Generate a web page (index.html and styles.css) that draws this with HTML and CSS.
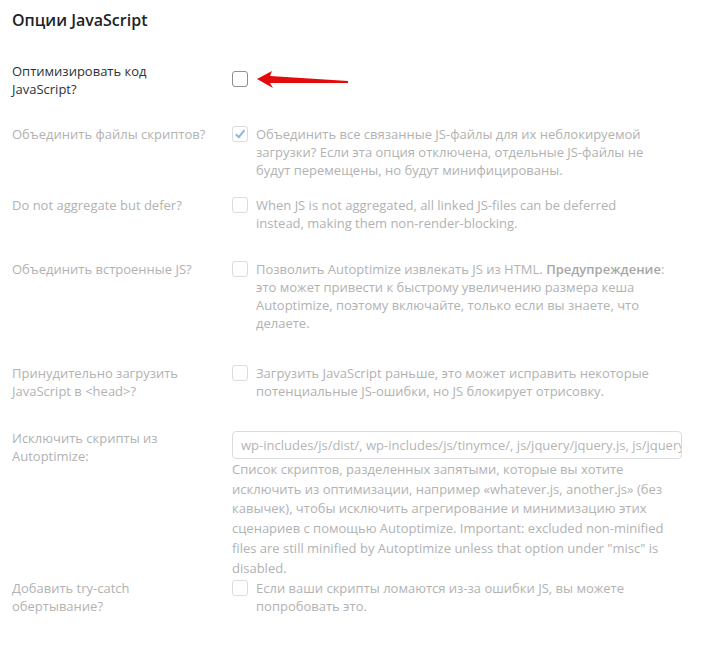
FILE: index.html
```html
<!DOCTYPE html>
<html lang="ru">
<head>
<meta charset="utf-8">
<title>Опции JavaScript</title>
<link rel="stylesheet" href="styles.css">
</head>
<body>
<div class="page">
  <h2 class="title">Опции JavaScript</h2>

  <div class="row r1">
    <div class="label active">Оптимизировать код JavaScript?</div>
    <div class="field">
      <div class="opt">
        <span class="cb active-cb"></span>
      </div>
      <svg class="arrow" width="100" height="24" viewBox="0 0 100 24" aria-hidden="true">
        <polygon points="1,9 16,1 14,6 92,11 92,13 14,13 17,18" fill="#e30b0b"/>
      </svg>
    </div>
  </div>

  <div class="row r2 disabled">
    <div class="label">Объединить файлы скриптов?</div>
    <div class="field">
      <div class="opt">
        <span class="cb checked">
          <svg width="12" height="12" viewBox="0 0 12 12"><path d="M1.8 6.2 L4.8 9.2 L10.4 2.2" fill="none" stroke="#8fb8da" stroke-width="2"/></svg>
        </span>
        <p class="desc">Объединить все связанные JS-файлы для их неблокируемой загрузки? Если эта опция отключена, отдельные JS-файлы не будут перемещены, но будут минифицированы.</p>
      </div>
    </div>
  </div>

  <div class="row r3 disabled">
    <div class="label">Do not aggregate but defer?</div>
    <div class="field">
      <div class="opt">
        <span class="cb"></span>
        <p class="desc">When JS is not aggregated, all linked JS-files can be deferred instead, making them non-render-blocking.</p>
      </div>
    </div>
  </div>

  <div class="row r4 disabled">
    <div class="label">Объединить встроенные JS?</div>
    <div class="field">
      <div class="opt">
        <span class="cb"></span>
        <p class="desc">Позволить Autoptimize извлекать JS из HTML. <strong>Предупреждение</strong>: это может привести к быстрому увеличению размера кеша Autoptimize, поэтому включайте, только если вы знаете, что делаете.</p>
      </div>
    </div>
  </div>

  <div class="row r5 disabled">
    <div class="label">Принудительно загрузить JavaScript в &lt;head&gt;?</div>
    <div class="field">
      <div class="opt">
        <span class="cb"></span>
        <p class="desc">Загрузить JavaScript раньше, это может исправить некоторые потенциальные JS-ошибки, но JS блокирует отрисовку.</p>
      </div>
    </div>
  </div>

  <div class="row r6 disabled">
    <div class="label">Исключить скрипты из Autoptimize:</div>
    <div class="field">
      <div class="input">wp-includes/js/dist/, wp-includes/js/tinymce/, js/jquery/jquery.js, js/jquery/jquery.min.js</div>
      <p class="desc wide">Список скриптов, разделенных запятыми, которые вы хотите исключить из оптимизации, например «whatever.js, another.js» (без кавычек), чтобы исключить агрегирование и минимизацию этих сценариев с помощью Autoptimize. Important: excluded non-minified files are still minified by Autoptimize unless that option under "misc" is disabled.</p>
    </div>
  </div>

  <div class="row r7 disabled">
    <div class="label">Добавить try-catch обертывание?</div>
    <div class="field">
      <div class="opt">
        <span class="cb"></span>
        <p class="desc">Если ваши скрипты ломаются из-за ошибки JS, вы можете попробовать это.</p>
      </div>
    </div>
  </div>
</div>
</body>
</html>
```

FILE: styles.css
```css
html, body {
  margin: 0;
  padding: 0;
  background: #ffffff;
}
body {
  font-family: "Open Sans", "Noto Sans", "Liberation Sans", sans-serif;
  font-size: 13px;
  line-height: 18px;
  color: #3c434a;
}
.page {
  padding: 10px 12px 0 12px;
  width: 670px;
}
.title {
  margin: 0;
  font-size: 16px;
  line-height: 20px;
  font-weight: 600;
  color: #1d2327;
}
.row {
  display: flex;
  align-items: flex-start;
}
.r1 { margin-top: 32px; }
.r2 { margin-top: 27px; }
.r3 { margin-top: 17px; }
.r4 { margin-top: 28px; }
.r5 { margin-top: 32px; }
.r6 { margin-top: 29px; }
.r7 { margin-top: 1px; }

.label {
  width: 220px;
  flex: none;
  padding-right: 20px;
  box-sizing: border-box;
  color: #b2b2b2;
}
.label.active {
  color: #2c3338;
}
.field {
  width: 450px;
  flex: none;
  display: flex;
  flex-direction: column;
  position: relative;
}
.opt {
  display: flex;
  align-items: flex-start;
  gap: 8px;
}
.opt .desc {
  width: 410px;
  flex: none;
}
.cb {
  width: 16px;
  height: 16px;
  box-sizing: border-box;
  flex: none;
  border: 1px solid #dcdcde;
  border-radius: 3px;
  background: #fff;
  display: flex;
  align-items: center;
  justify-content: center;
  margin-top: 1px;
}
.active-cb {
  border-color: #8c8f94;
  margin-top: 9px;
}
.cb.checked {
  border-color: #d6dde3;
}
.desc {
  margin: 0;
  color: #b2b2b2;
}
.desc strong {
  font-weight: 600;
  color: #a7a7a7;
}
.desc.wide {
  margin-top: 1px;
  line-height: 19.7px;
}
.input {
  margin-top: 2px;
  height: 28px;
  box-sizing: border-box;
  border: 1px solid #dcdcde;
  border-radius: 4px;
  padding: 0 8px;
  line-height: 26px;
  white-space: nowrap;
  overflow: hidden;
  color: #b5b5b5;
}
.arrow {
  position: absolute;
  left: 24px;
  top: 8px;
}
```
